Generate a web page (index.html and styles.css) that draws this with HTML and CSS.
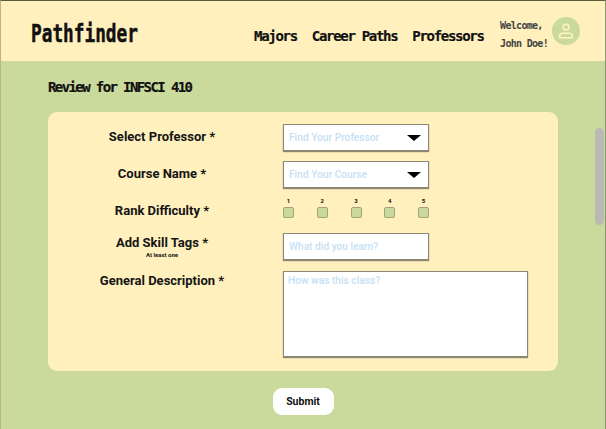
FILE: index.html
```html
<!DOCTYPE html>
<html lang="en">
<head>
<meta charset="utf-8">
<title>Pathfinder - Review</title>
<link rel="stylesheet" href="styles.css">
</head>
<body>
<div class="page">
	<div class="header">
		<div class="logo"><span>Pathfinder</span></div>
		<div class="nav">
			<a>Majors</a>
			<a>Career Paths</a>
			<a>Professors</a>
		</div>
		<div class="welcome">Welcome,<br>John Doe!</div>
		<div class="avatar">
			<svg width="16" height="16" viewBox="0 0 20 20" fill="none" stroke="#fff3bf" stroke-width="2">
				<circle cx="10" cy="5.2" r="3.6"/>
				<path d="M2 18.5v-1.8c0-2.4 1.8-3.9 4-3.9h8c2.2 0 4 1.5 4 3.9v1.8z"/>
			</svg>
		</div>
	</div>

	<div class="content">
		<h1 class="title">Review for INFSCI 410</h1>
		<div class="card">
			<div class="row row-select">
				<div class="label">Select Professor *</div>
				<div class="field select"><span>Find Your Professor</span><i class="arrow"></i></div>
			</div>
			<div class="row row-select">
				<div class="label">Course Name *</div>
				<div class="field select"><span>Find Your Course</span><i class="arrow"></i></div>
			</div>
			<div class="row row-rank">
				<div class="label">Rank Difficulty *</div>
				<div class="rank">
					<div class="rank-item">1<b></b></div>
					<div class="rank-item">2<b></b></div>
					<div class="rank-item">3<b></b></div>
					<div class="rank-item">4<b></b></div>
					<div class="rank-item">5<b></b></div>
				</div>
			</div>
			<div class="row row-tags">
				<div class="label">Add Skill Tags *<small>At least one</small></div>
				<div class="field"><span>What did you learn?</span></div>
			</div>
			<div class="row row-desc">
				<div class="label">General Description *</div>
				<div class="field area"><span>How was this class?</span></div>
			</div>
		</div>
		<div class="actions"><button class="submit">Submit</button></div>
	</div>
	<div class="thumb"></div>
</div>
</body>
</html>
```

FILE: styles.css
```css
*{ margin:0; padding:0; box-sizing:border-box; }
html,body{ height:100%; overflow:hidden; }
body{ font-family:Roboto,"Liberation Sans",sans-serif; color:#111; background:#c9da9c; }
.page{ position:relative; height:429px; border-top:1px solid #5c5a3e; border-right:1px solid #86996a; border-left:1px solid #b9b48c; }

.header{ display:flex; align-items:center; height:60px; background:#fff0bd; padding:0 25px 0 30px; font-family:"DejaVu Sans Mono",monospace; font-weight:700; white-space:nowrap; }
.logo{ width:223px; margin-top:5px; font-size:24px; line-height:28px; color:#111; -webkit-text-stroke:.5px #111; }
.logo span{ display:block; transform:scaleX(.74); transform-origin:0 50%; }
.nav{ display:flex; gap:15px; margin-top:10px; font-size:14px; letter-spacing:-1.3px; color:#111; -webkit-text-stroke:.2px #111; }
.welcome{ margin-left:auto; margin-top:7px; font-size:10px; letter-spacing:-.7px; line-height:18px; color:#444; }
.avatar{ display:flex; align-items:center; justify-content:center; width:28px; height:28px; margin-left:4px; border-radius:50%; background:#c9da9c; }

.content{ padding:16px 47px 0 47px; }
.title{ font-family:"DejaVu Sans Mono",monospace; font-weight:700; font-size:14px; letter-spacing:-1.6px; line-height:20px; color:#111; -webkit-text-stroke:.2px #111; }
.card{ margin-top:15px; height:259px; padding-top:12px; background:#fff0bd; border-radius:9px; }
.row{ display:flex; }
.label{ width:228px; margin-right:7px; text-align:center; font-size:13px; font-weight:700; line-height:18px; color:#151515; }
.label small{ display:block; font-size:6px; line-height:5px; }
.row-select{ height:37px; }
.row-select .label{ padding-top:4px; }
.row-rank{ height:35px; }
.row-rank .label{ padding-top:4px; }
.row-tags{ height:38px; }
.row-tags .label{ padding-top:1px; }
.row-desc .label{ padding-top:1px; }

.field{ display:flex; align-items:center; justify-content:space-between; width:146px; height:27px; padding:0 7px 0 5px; background:#fff; border:1px solid #8c8672; box-shadow:0 1px 1px #8c8672; font-size:10.2px; font-weight:500; color:#c6dff5; }
.area{ align-items:flex-start; width:245px; height:86px; padding:3px 4px; }
.arrow{ border-top:6px solid #000; border-left:7px solid transparent; border-right:7px solid transparent; }

.rank{ display:flex; justify-content:space-between; width:146px; margin-top:-1px; }
.rank-item{ display:flex; flex-direction:column; align-items:center; gap:3px; width:11px; font-size:6px; font-weight:700; line-height:7px; }
.rank-item b{ display:block; width:11px; height:11px; background:#c9da9c; border:1px solid #a3a27a; border-radius:2px; }

.actions{ display:flex; justify-content:center; margin-top:17px; }
.submit{ width:61px; height:27px; border:0; border-radius:9px; background:#fff; font-family:Roboto,"Liberation Sans",sans-serif; font-size:10.5px; font-weight:700; color:#111; }

.thumb{ position:absolute; top:127px; right:1px; width:9px; height:97px; border-radius:5px; background:#b9b9b5; }
```
